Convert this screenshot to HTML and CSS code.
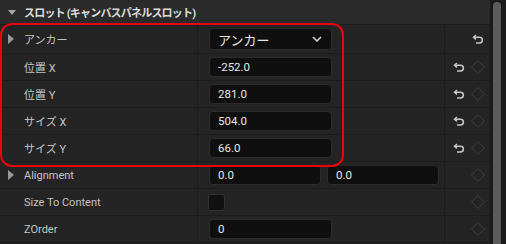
FILE: index.html
```html
<!DOCTYPE html>
<html lang="ja">

<head>
    <meta charset="UTF-8">
    <title>Details</title>
    <link rel="stylesheet" href="styles.css">
</head>

<body>
    <div class="panel">
        <div class="details">
            <div class="category">
                <span class="caret-down"></span>
                スロット (キャンバスパネルスロット)
            </div>

            <div class="row row-tall">
                <div class="name"><span class="expander"></span>アンカー</div>
                <div class="value">
                    <div class="combo">
                        <span>アンカー</span>
                        <svg class="chevron" width="10" height="6" viewBox="0 0 10 6">
                            <path d="M1 1 L5 5 L9 1" fill="none" stroke="#d0d0d0" stroke-width="1.6" />
                        </svg>
                    </div>
                </div>
                <div class="extras">
                    <svg class="reset" width="12" height="10" viewBox="0 0 12 10">
                        <path d="M4 1 L1.5 3.2 L4 5.4" fill="none" stroke="#c8c8c8" stroke-width="1.5" />
                        <path d="M2 3.2 H7.5 A2.9 2.9 0 0 1 7.5 9 H4" fill="none" stroke="#c8c8c8" stroke-width="1.5" />
                    </svg>
                </div>
            </div>

            <div class="row">
                <div class="name">位置 X</div>
                <div class="value"><div class="field">-252.0</div></div>
                <div class="extras">
                    <svg class="reset" width="12" height="10" viewBox="0 0 12 10">
                        <path d="M4 1 L1.5 3.2 L4 5.4" fill="none" stroke="#c8c8c8" stroke-width="1.5" />
                        <path d="M2 3.2 H7.5 A2.9 2.9 0 0 1 7.5 9 H4" fill="none" stroke="#c8c8c8" stroke-width="1.5" />
                    </svg>
                    <span class="key"></span>
                </div>
            </div>

            <div class="row">
                <div class="name">位置 Y</div>
                <div class="value"><div class="field">281.0</div></div>
                <div class="extras">
                    <svg class="reset" width="12" height="10" viewBox="0 0 12 10">
                        <path d="M4 1 L1.5 3.2 L4 5.4" fill="none" stroke="#c8c8c8" stroke-width="1.5" />
                        <path d="M2 3.2 H7.5 A2.9 2.9 0 0 1 7.5 9 H4" fill="none" stroke="#c8c8c8" stroke-width="1.5" />
                    </svg>
                    <span class="key"></span>
                </div>
            </div>

            <div class="row">
                <div class="name">サイズ X</div>
                <div class="value"><div class="field">504.0</div></div>
                <div class="extras">
                    <svg class="reset" width="12" height="10" viewBox="0 0 12 10">
                        <path d="M4 1 L1.5 3.2 L4 5.4" fill="none" stroke="#c8c8c8" stroke-width="1.5" />
                        <path d="M2 3.2 H7.5 A2.9 2.9 0 0 1 7.5 9 H4" fill="none" stroke="#c8c8c8" stroke-width="1.5" />
                    </svg>
                    <span class="key"></span>
                </div>
            </div>

            <div class="row">
                <div class="name">サイズ Y</div>
                <div class="value"><div class="field">66.0</div></div>
                <div class="extras">
                    <svg class="reset" width="12" height="10" viewBox="0 0 12 10">
                        <path d="M4 1 L1.5 3.2 L4 5.4" fill="none" stroke="#c8c8c8" stroke-width="1.5" />
                        <path d="M2 3.2 H7.5 A2.9 2.9 0 0 1 7.5 9 H4" fill="none" stroke="#c8c8c8" stroke-width="1.5" />
                    </svg>
                    <span class="key"></span>
                </div>
            </div>

            <div class="row">
                <div class="name"><span class="expander"></span>Alignment</div>
                <div class="value pair">
                    <div class="field half">0.0</div>
                    <div class="field half">0.0</div>
                </div>
                <div class="extras"><span class="key"></span></div>
            </div>

            <div class="row">
                <div class="name">Size To Content</div>
                <div class="value"><div class="checkbox"></div></div>
                <div class="extras"><span class="key"></span></div>
            </div>

            <div class="row">
                <div class="name">ZOrder</div>
                <div class="value"><div class="field">0</div></div>
                <div class="extras"><span class="key"></span></div>
            </div>
        </div>

        <div class="scrollbar">
            <div class="thumb"></div>
        </div>

        <!-- red annotation drawn over the anchor / offset rows -->
        <div class="highlight"></div>
    </div>
</body>

</html>
```

FILE: styles.css
```css
body {
    margin: 0;
    padding: 0;
    background-color: #242424;
    font-family: Roboto, "Noto Sans CJK JP", sans-serif;
    color: #c4c4c4;
}

.panel {
    position: relative;
    display: flex;
    width: 506px;
    height: 244px;
    overflow: hidden;
}

.details {
    width: 490px;
}

.category {
    display: flex;
    align-items: center;
    height: 24px;
    padding-left: 8px;
    background-color: #2b2b2b;
    border-bottom: 1px solid #1c1c1c;
    font-size: 11px;
    font-weight: bold;
    letter-spacing: -0.8px;
    color: #dcdcdc;
}

.caret-down {
    width: 0;
    height: 0;
    border-left: 4px solid transparent;
    border-right: 4px solid transparent;
    border-top: 5px solid #a8a8a8;
    margin-right: 8px;
}

.row {
    display: flex;
    height: 26px;
    border-bottom: 1px solid #1c1c1c;
}

.row-tall {
    height: 28px;
}

.name {
    display: flex;
    align-items: center;
    width: 173px;
    padding-left: 24px;
    border-right: 1px solid #1c1c1c;
    font-size: 11px;
    position: relative;
}

.expander {
    position: absolute;
    left: 8px;
    top: 50%;
    margin-top: -5px;
    width: 0;
    height: 0;
    border-top: 5px solid transparent;
    border-bottom: 5px solid transparent;
    border-left: 6px solid #9a9a9a;
}

.value {
    display: flex;
    align-items: center;
    width: 235px;
    padding-left: 11px;
    border-right: 1px solid #1c1c1c;
}

.pair {
    gap: 6px;
}

.field,
.combo {
    box-sizing: border-box;
    width: 123px;
    height: 20px;
    padding-left: 8px;
    display: flex;
    align-items: center;
    background-color: #0f0f0f;
    border: 1px solid #2c2c2c;
    border-radius: 4px;
    font-size: 11.5px;
    color: #e6e6e6;
}

.field.half {
    width: 112px;
}

.combo {
    height: 22px;
    justify-content: space-between;
    padding-right: 9px;
    font-size: 13px;
}

.checkbox {
    width: 15px;
    height: 15px;
    margin-left: -1px;
    background-color: #111111;
    border: 1px solid #303030;
    border-radius: 3px;
}

.extras {
    flex: 1;
    display: flex;
    align-items: center;
    justify-content: flex-end;
    gap: 8px;
    padding-right: 6px;
}

.key {
    width: 8px;
    height: 8px;
    margin-right: 1px;
    border: 1px solid #3a3a3a;
    transform: rotate(45deg);
}

.scrollbar {
    width: 16px;
    height: 244px;
    background-color: #1b1b1b;
}

.thumb {
    width: 8px;
    height: 260px;
    margin-top: 2px;
    margin-left: 3px;
    border-radius: 4px;
    background-color: #5c5c5c;
}

.highlight {
    position: absolute;
    left: 0;
    top: 23px;
    width: 340px;
    height: 140px;
    border: 2px solid #e8040a;
    border-radius: 12px;
}
```
